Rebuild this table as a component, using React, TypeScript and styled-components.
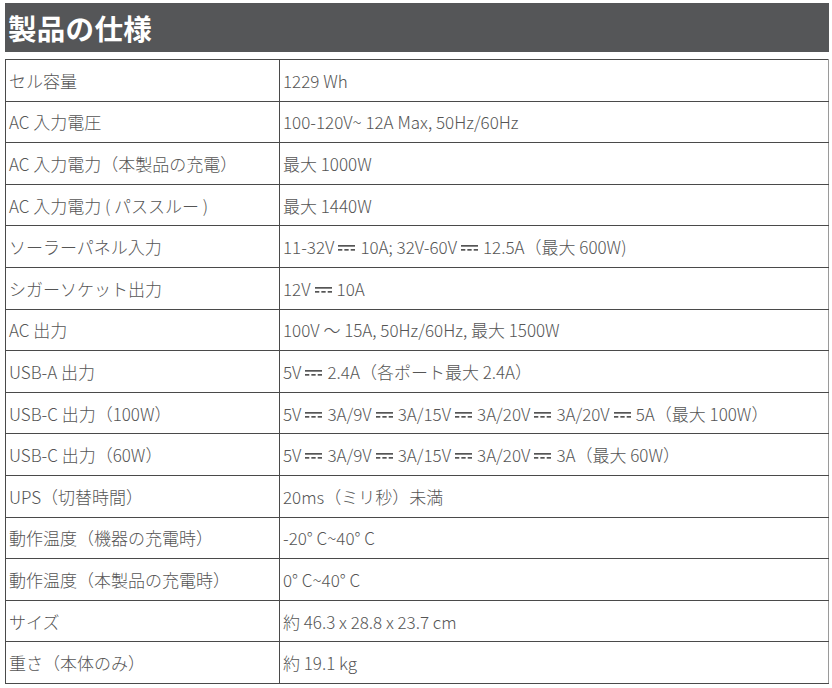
import React from "react";
import styled, { createGlobalStyle } from "styled-components";

const Global = createGlobalStyle`
  html, body { margin: 0; padding: 0; background: #fff; }
  body { font-family: "Noto Sans CJK JP", "Noto Sans", sans-serif; }
`;

const Page = styled.div`
  width: 832px;
  padding: 3px 3px 0 5px;
  box-sizing: border-box;
`;

const Header = styled.h2`
  margin: 0;
  height: 49px;
  background: #555658;
  color: #fff;
  font-size: 28.5px;
  font-weight: 700;
  line-height: 49px;
  padding-left: 3px;
  letter-spacing: 0.3px;
`;

const Table = styled.table`
  margin-top: 7px;
  width: 824px;
  border-collapse: collapse;
  table-layout: fixed;
  color: #555;
  font-size: 17px;
  font-weight: 300;
`;

const Row = styled.tr`
  height: 41.6px;
`;

const Cell = styled.td<{ $w?: number }>`
  border: 1px solid #4a4a4a;
  padding: 0 0 0 3px;
  vertical-align: middle;
  white-space: nowrap;
  width: ${(p) => (p.$w ? `${p.$w}px` : "auto")};
  &:last-child { border-right-color: #9a9a9a; }
`;

const DcWrap = styled.svg`
  display: inline-block;
  width: 17px;
  height: 8px;
  margin: 0 5px 0 4px;
  vertical-align: 2px;
`;

const Dc = () => (
  <DcWrap viewBox="0 0 17 8">
    <rect x="0" y="1" width="17" height="1.7" fill="#555" />
    <rect x="0" y="5" width="4.3" height="1.7" fill="#555" />
    <rect x="6.35" y="5" width="4.3" height="1.7" fill="#555" />
    <rect x="12.7" y="5" width="4.3" height="1.7" fill="#555" />
  </DcWrap>
);

const D = "§";
const rows: [string, string][] = [
  ["セル容量", "1229 Wh"],
  ["AC 入力電圧", "100-120V~ 12A Max, 50Hz/60Hz"],
  ["AC 入力電力（本製品の充電）", "最大 1000W"],
  ["AC 入力電力 ( パススルー )", "最大 1440W"],
  ["ソーラーパネル入力", `11-32V${D}10A; 32V-60V${D}12.5A（最大 600W)`],
  ["シガーソケット出力", `12V${D}10A`],
  ["AC 出力", "100V 〜 15A, 50Hz/60Hz, 最大 1500W"],
  ["USB-A 出力", `5V${D}2.4A（各ポート最大 2.4A）`],
  ["USB-C 出力（100W）", `5V${D}3A/9V${D}3A/15V${D}3A/20V${D}3A/20V${D}5A（最大 100W）`],
  ["USB-C 出力（60W）", `5V${D}3A/9V${D}3A/15V${D}3A/20V${D}3A（最大 60W）`],
  ["UPS（切替時間）", "20ms（ミリ秒）未満"],
  ["動作温度（機器の充電時）", "-20° C~40° C"],
  ["動作温度（本製品の充電時）", "0° C~40° C"],
  ["サイズ", "約 46.3 x 28.8 x 23.7 cm"],
  ["重さ（本体のみ）", "約 19.1 kg"],
];

const renderValue = (v: string) => {
  const parts = v.split(D);
  return parts.map((p, i) => (
    <React.Fragment key={i}>
      {p}
      {i < parts.length - 1 && <Dc />}
    </React.Fragment>
  ));
};

export default function App() {
  return (
    <Page>
      <Global />
      <Header>製品の仕様</Header>
      <Table>
        <tbody>
          {rows.map(([k, v], i) => (
            <Row key={i}>
              <Cell $w={270}>{k}</Cell>
              <Cell>{renderValue(v)}</Cell>
            </Row>
          ))}
        </tbody>
      </Table>
    </Page>
  );
}
